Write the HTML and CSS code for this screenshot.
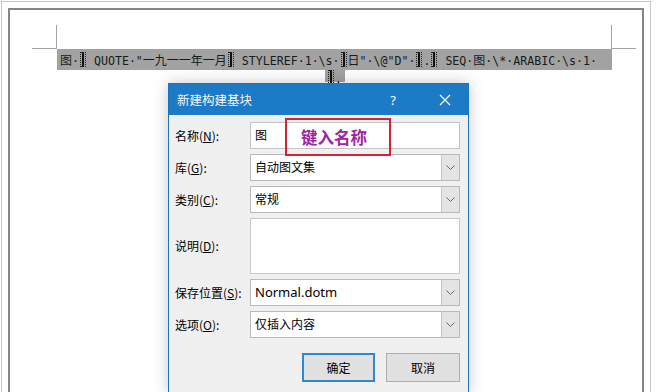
FILE: index.html
```html
<!DOCTYPE html>
<html lang="zh-CN">
<head>
<meta charset="utf-8">
<title>新建构建基块</title>
<link rel="stylesheet" href="styles.css">
</head>
<body>
<div class="screen">
  <div class="page">
    <div class="marks">
      <div class="mark mark-left"></div>
      <div class="mark mark-right"></div>
    </div>
    <div class="field-line"><span class="cjk">图</span>·<span class="brace"></span> QUOTE·"<span class="cjk">一九一一年一月</span><span class="brace"></span> STYLEREF·1·\s·<span class="brace"></span><span class="cjk">日</span>"·\@"D"·<span class="brace"></span>.<span class="brace"></span> SEQ·<span class="cjk">图</span>·\*·ARABIC·\s·1·</div>
    <div class="field-line2"><span class="field-tail"><span class="brace"></span>.</span></div>
  </div>

  <div class="dialog">
    <div class="titlebar">
      <span class="title">新建构建基块</span>
      <span class="help">?</span>
      <span class="close"><svg width="12" height="12" viewBox="0 0 12 12"><path d="M1 1L11 11M11 1L1 11" stroke="#fff" stroke-width="1.2" fill="none"/></svg></span>
    </div>
    <div class="body">
      <div class="form">
        <label class="lbl">名称(<u>N</u>):</label>
        <div class="input"><span class="val">图</span></div>

        <label class="lbl">库(<u>G</u>):</label>
        <div class="input select"><span class="val">自动图文集</span><span class="drop"><svg width="9" height="5" viewBox="0 0 9 5"><path d="M0.5 0.5L4.5 4.5L8.5 0.5" stroke="#666" fill="none"/></svg></span></div>

        <label class="lbl">类别(<u>C</u>):</label>
        <div class="input select"><span class="val">常规</span><span class="drop"><svg width="9" height="5" viewBox="0 0 9 5"><path d="M0.5 0.5L4.5 4.5L8.5 0.5" stroke="#666" fill="none"/></svg></span></div>

        <label class="lbl">说明(<u>D</u>):</label>
        <div class="input textarea"></div>

        <label class="lbl">保存位置(<u>S</u>):</label>
        <div class="input select"><span class="val latin">Normal.dotm</span><span class="drop"><svg width="9" height="5" viewBox="0 0 9 5"><path d="M0.5 0.5L4.5 4.5L8.5 0.5" stroke="#666" fill="none"/></svg></span></div>

        <label class="lbl">选项(<u>O</u>):</label>
        <div class="input select"><span class="val">仅插入内容</span><span class="drop"><svg width="9" height="5" viewBox="0 0 9 5"><path d="M0.5 0.5L4.5 4.5L8.5 0.5" stroke="#666" fill="none"/></svg></span></div>
      </div>
      <div class="buttons">
        <button class="btn btn-default">确定</button>
        <button class="btn">取消</button>
      </div>
    </div>
  </div>

  <div class="note">键入名称</div>
</div>
</body>
</html>
```

FILE: styles.css
```css
html, body {
  margin: 0;
  padding: 0;
  background: #ffffff;
  width: 658px;
  height: 392px;
  overflow: hidden;
}

.screen {
  position: relative;
  margin: 1px 0 0 1px;
  width: 636px;
  height: 384px;
  padding: 6px 6px 0 6px;
  border-top: 1px solid #c6c6c6;
  border-left: 1px solid #c6c6c6;
  border-right: 1px solid #c6c6c6;
}

.page {
  height: 100%;
  border: 2px solid #858585;
  border-bottom: none;
  box-sizing: border-box;
  background: #fff;
}

.marks {
  display: flex;
  justify-content: space-between;
  padding: 0 6px 0 22px;
  margin-top: 15px;
}

.mark {
  width: 24px;
  height: 23px;
  border-bottom: 1px solid #a4a4a4;
}
.mark-left { border-right: 1px solid #a4a4a4; }
.mark-right { border-left: 1px solid #a4a4a4; }

.field-line {
  margin-left: 47px;
  width: 555px;
  height: 21px;
  line-height: 21px;
  background: #a2a2a2;
  color: #1a1a1a;
  font-family: "DejaVu Sans Mono", "Noto Sans CJK SC", monospace;
  font-size: 11.6px;
  white-space: nowrap;
  overflow: hidden;
  padding-left: 3px;
  box-sizing: border-box;
}

.cjk {
  font-family: "Noto Sans CJK SC", sans-serif;
  font-size: 12px;
}

.brace {
  display: inline-block;
  width: 4px;
  height: 13px;
  border: 1px dotted #222;
  background: linear-gradient(90deg, transparent 1px, #111 1px, #111 3px, transparent 3px);
  vertical-align: -2px;
  margin: 0 1px;
}

.field-line2 {
  text-align: center;
  height: 12px;
  line-height: 14px;
  padding-left: 18px;
}

.field-tail {
  display: inline-block;
  background: #a2a2a2;
  width: 20px;
  height: 12px;
  font-family: "DejaVu Sans Mono", monospace;
  font-size: 11px;
  text-align: left;
  padding-left: 2px;
  box-sizing: border-box;
}

/* dialog */
.dialog {
  position: absolute;
  left: 166px;
  top: 81px;
  width: 301px;
  height: 311px;
  box-sizing: border-box;
  border: 1px solid #1b73bd;
  border-bottom: none;
  background: #f0f0f0;
  box-shadow: 0 0 14px rgba(0, 0, 0, 0.22);
  font-family: "Noto Sans CJK SC", sans-serif;
  font-size: 12px;
  color: #000;
}

.titlebar {
  display: flex;
  align-items: center;
  height: 31px;
  background: #1d7ac6;
  color: #fff;
}

.title {
  flex: 1;
  padding-left: 8px;
  font-size: 12.5px;
  color: #f4f8fc;
}

.help {
  width: 30px;
  text-align: center;
  font-family: "Noto Sans", sans-serif;
  font-size: 13px;
  margin-right: 14px;
}

.close {
  width: 46px;
  display: flex;
  justify-content: center;
  align-items: center;
}

.body {
  padding: 7px 7px 0 6px;
}

.form {
  display: grid;
  grid-template-columns: 75px 210px;
  grid-template-rows: 27px 27px 27px 56px 27px 27px;
  row-gap: 5px;
  align-items: center;
}

.lbl {
  white-space: nowrap;
  line-height: 16px;
}

.input {
  height: 27px;
  box-sizing: border-box;
  border: 1px solid #c4c4c4;
  background: #fff;
  display: flex;
  align-items: center;
}

.val {
  flex: 1;
  padding-left: 4px;
  padding-bottom: 2px;
}

.latin {
  font-family: "Noto Sans", sans-serif;
  font-size: 13px;
}

.select {
  border-color: #b9b9b9;
}

.drop {
  width: 17px;
  height: 100%;
  background: #e4e4e4;
  border-left: 1px solid #c7c7c7;
  display: flex;
  align-items: center;
  justify-content: center;
}

.textarea {
  height: 56px;
  align-self: stretch;
  border-color: #c8c8c8;
}

.buttons {
  display: flex;
  justify-content: flex-end;
  gap: 11px;
  margin-top: 15px;
  padding-right: 1px;
}

.btn {
  width: 74px;
  height: 29px;
  box-sizing: border-box;
  background: #e1e1e1;
  border: 1px solid #adadad;
  font-family: "Noto Sans CJK SC", sans-serif;
  font-size: 12px;
  color: #000;
  padding: 0;
}

.btn-default {
  width: 73px;
  border: 2px solid #2f86d2;
}

/* annotation */
.note {
  position: absolute;
  left: 283px;
  top: 116px;
  width: 106px;
  height: 38px;
  box-sizing: border-box;
  border: 2px solid #d52236;
  color: #a0249e;
  font-family: "Noto Sans CJK SC", sans-serif;
  font-weight: bold;
  font-size: 16.5px;
  line-height: 34px;
  padding-left: 14px;
  white-space: nowrap;
}
```
